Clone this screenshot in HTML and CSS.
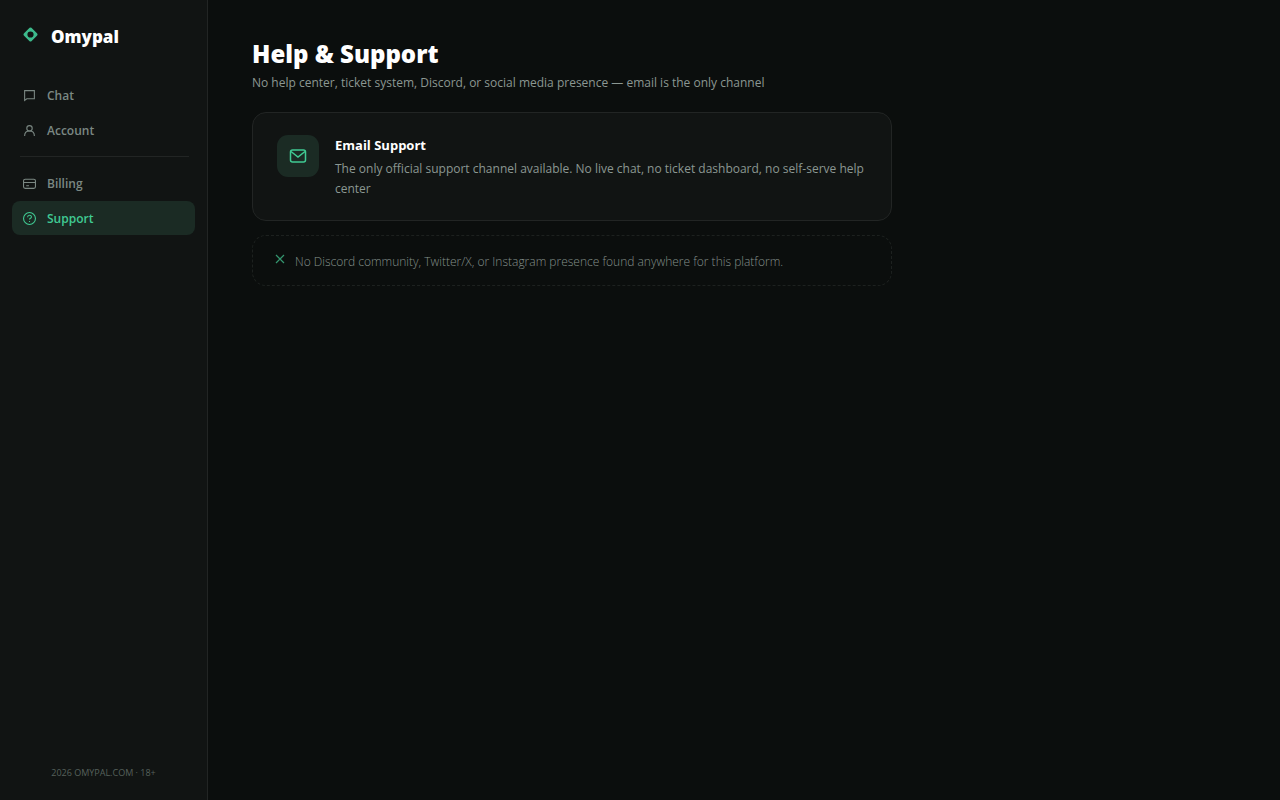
FILE: index.html
```html
<!DOCTYPE html>
<html lang="en">
<head>
  <meta charset="UTF-8">
  <meta name="viewport" content="width=device-width, initial-scale=1">
  <title>Help &amp; Support - Omypal</title>
  <link rel="stylesheet" href="styles.css">
</head>
<body>
  <aside class="sidebar">
    <a class="logo" href="#">
      <svg class="logo-mark" viewBox="0 0 16 16" aria-hidden="true">
        <path fill="#3dba8c" fill-rule="evenodd" d="M7 .9Q8 0 9 .9L15.1 7Q16 8 15.1 9L9 15.1Q8 16 7 15.1L.9 9Q0 8 .9 7ZM8 4.7A3.3 3.3 0 1 0 8 11.3A3.3 3.3 0 1 0 8 4.7Z"/>
      </svg>
      <span>Omypal</span>
    </a>
    <nav class="nav">
      <a class="nav-item" href="#">
        <svg class="icon" viewBox="0 0 24 24"><path d="M3 3h18v15H7l-4 3z"/></svg>
        Chat
      </a>
      <a class="nav-item" href="#">
        <svg class="icon" viewBox="0 0 24 24"><circle cx="12" cy="8" r="5"/><path d="M3 22c0-5 3-9 9-9s9 4 9 9"/></svg>
        Account
      </a>
      <hr class="divider">
      <a class="nav-item" href="#">
        <svg class="icon" viewBox="0 0 24 24"><rect x="1" y="4" width="22" height="17" rx="3"/><path d="M1 10h22M6 16h5"/></svg>
        Billing
      </a>
      <a class="nav-item active" href="#" aria-current="page">
        <svg class="icon" viewBox="0 0 24 24"><circle cx="12" cy="12" r="11"/><path d="M8.500 9.500c0-4.500 7-4.500 7-.5 0 2.500-3.500 2.500-3.500 5M12 16.500v2"/></svg>
        Support
      </a>
    </nav>
    <footer class="sidebar-footer">2026 OMYPAL.COM · 18+</footer>
  </aside>

  <main class="content">
    <h1>Help &amp; Support</h1>
    <p class="subtitle">No help center, ticket system, Discord, or social media presence — email is the only channel</p>

    <section class="card">
      <div class="card-icon">
        <svg viewBox="0 0 18 18" aria-hidden="true"><rect x="1.500" y="3" width="15" height="12" rx="2"/><path d="M2 4.500L9 10l7-5.500"/></svg>
      </div>
      <div>
        <h2>Email Support</h2>
        <p>The only official support channel available. No live chat, no ticket dashboard, no self-serve help center</p>
      </div>
    </section>

    <section class="notice">
      <svg class="notice-icon" viewBox="0 0 10 10" aria-hidden="true"><path d="M1 1l8 8M9 1L1 9"/></svg>
      <p>No Discord community, Twitter/X, or Instagram presence found anywhere for this platform.</p>
    </section>
  </main>
</body>
</html>
```
FILE: styles.css
```css
* {
  box-sizing: border-box;
}

body {
  margin: 0;
  min-height: 100vh;
  display: flex;
  background: #0b0e0d;
  color: #fff;
  font-family: "Open Sans", "Noto Sans", sans-serif;
  font-size: 12px;
  line-height: 20px;
}

h1, h2, p {
  margin: 0;
}

svg {
  fill: none;
  stroke: currentColor;
  flex-shrink: 0;
}

.sidebar {
  width: 208px;
  flex-shrink: 0;
  display: flex;
  flex-direction: column;
  padding: 25px 12px 19px;
  background: #111413;
  border-right: 1px solid #222524;
}

.logo {
  display: flex;
  align-items: flex-start;
  gap: 13px;
  padding: 0 11px;
  margin-bottom: 29px;
  color: #fff;
  font-size: 17px;
  font-weight: 800;
  line-height: 24px;
  text-decoration: none;
}

.logo-mark {
  width: 15px;
  height: 15px;
  margin-top: 2px;
  stroke: none;
}

.nav {
  display: flex;
  flex-direction: column;
  gap: 1px;
}

.nav-item {
  display: flex;
  align-items: center;
  gap: 11px;
  height: 34px;
  padding: 1px 11px 0;
  border-radius: 8px;
  color: #7b8883;
  font-weight: 600;
  text-decoration: none;
}

.nav-item.active {
  background: #1b2b24;
  color: #40ca93;
}

.icon {
  width: 13px;
  height: 13px;
  stroke-width: 2;
}

.divider {
  width: auto;
  height: 1px;
  margin: 8px 6px 8px 8px;
  border: 0;
  background: #222524;
}

.sidebar-footer {
  margin-top: auto;
  color: #56615c;
  font-size: 9px;
  line-height: 16px;
  text-align: center;
}

.content {
  flex: 1;
  padding: 36px 44px;
}

h1 {
  margin-bottom: 1px;
  font-size: 24px;
  font-weight: 800;
  line-height: 36px;
}

.subtitle {
  margin-bottom: 19px;
  color: #8b9792;
}

.card,
.notice {
  max-width: 640px;
  display: flex;
  border-radius: 14px;
}

.card {
  gap: 16px;
  padding: 22px 24px 21px;
  margin-bottom: 14px;
  background: #111413;
  border: 1px solid #222524;
}

.card-icon {
  width: 42px;
  height: 42px;
  flex-shrink: 0;
  display: flex;
  align-items: center;
  justify-content: center;
  border-radius: 11px;
  background: #1b2b24;
  color: #40ca93;
}

.card-icon svg {
  width: 18px;
  height: 18px;
  stroke-width: 1.500;
}

.card h2 {
  margin-bottom: 4px;
  font-size: 13px;
  font-weight: 700;
}

.card p {
  color: #8b9792;
}

.notice {
  gap: 10px;
  padding: 16px 22px 13px;
  border: 1px dashed #1d211f;
  color: #84908b;
  font-weight: 300;
}

.notice-icon {
  width: 10px;
  height: 10px;
  margin-top: 2px;
  color: #34956f;
  stroke-width: 1.200;
}
```
